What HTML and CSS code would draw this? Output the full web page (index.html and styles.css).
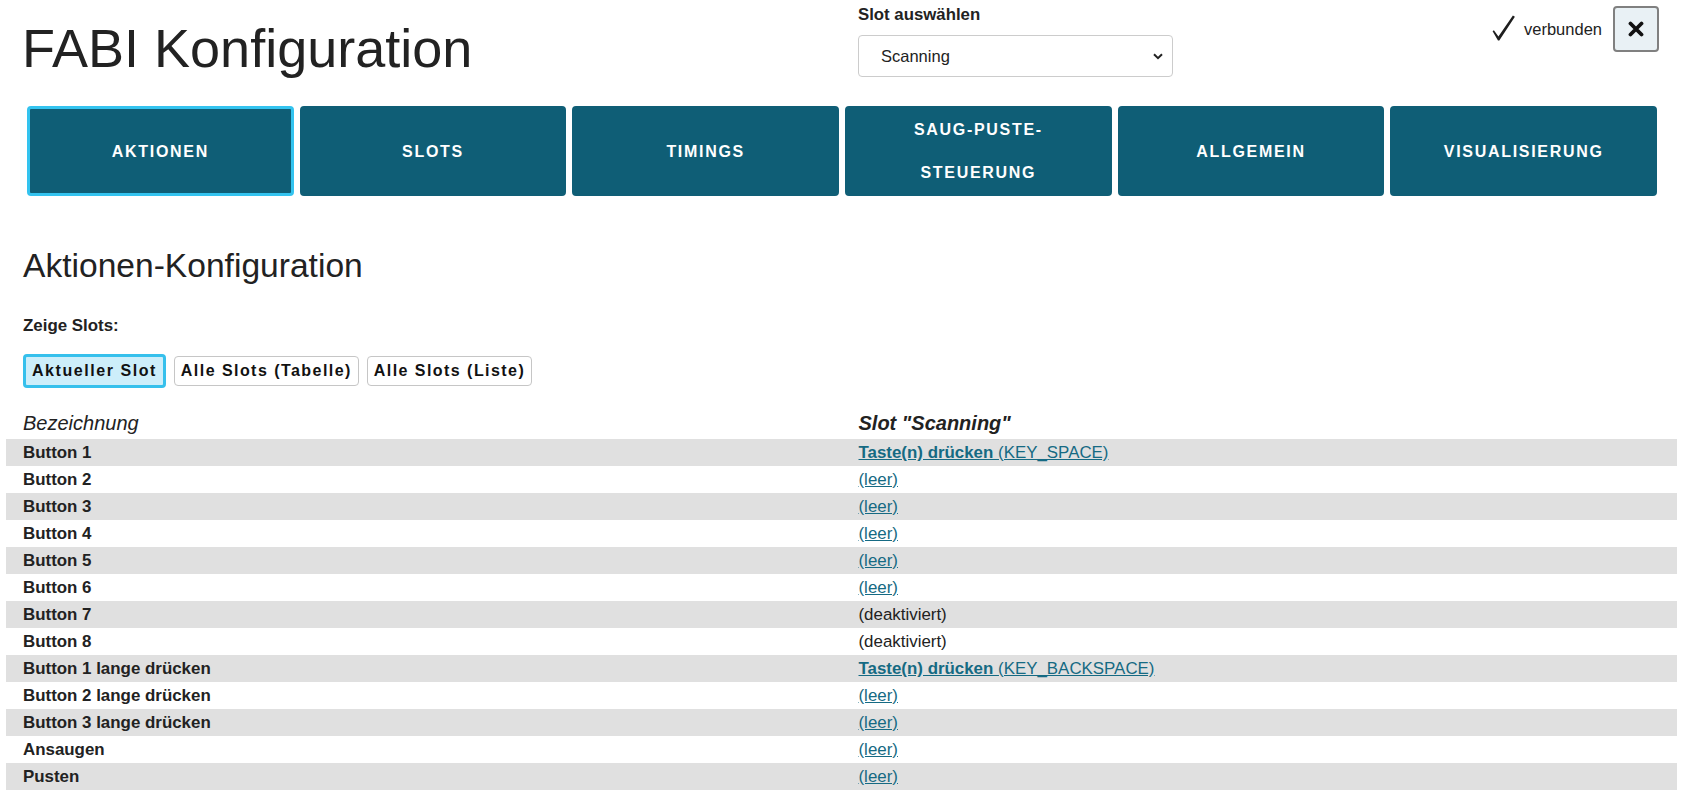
FILE: index.html
```html
<!DOCTYPE html>
<html lang="de">
<head>
<meta charset="utf-8">
<title>FABI Konfiguration</title>
<link rel="stylesheet" href="styles.css">
</head>
<body>
<header class="top">
  <h1 class="app-title">FABI Konfiguration</h1>
  <div class="slot-select">
    <label class="slot-label" for="slot">Slot auswählen</label>
    <div class="select-wrap">
      <select id="slot" class="select">
        <option>Scanning</option>
      </select>
      <svg class="chevron" width="10" height="7" viewBox="0 0 10 7"><path d="M1 1.2 L5 5.2 L9 1.2" fill="none" stroke="#222" stroke-width="2"/></svg>
    </div>
  </div>
  <div class="status">
    <svg class="check" width="24" height="26" viewBox="0 0 24 26"><path d="M0.6 16.2 L1.9 15.3 L6.4 21.6 L20.9 0.6 L22.9 1.7 L7.3 25.6 L6 25.6 Z" fill="#1e1e1e"/></svg>
    <span class="status-text">verbunden</span>
    <button class="close-btn" type="button" aria-label="Trennen"><svg width="16" height="16" viewBox="0 0 16 16"><path d="M2.5 2.5 L13.5 13.5 M13.5 2.5 L2.5 13.5" stroke="#111" stroke-width="3.8" stroke-linecap="round"/></svg></button>
  </div>
</header>

<nav class="tabs">
  <button class="tab active" type="button">Aktionen</button>
  <button class="tab" type="button">Slots</button>
  <button class="tab" type="button">Timings</button>
  <button class="tab" type="button">Saug-Puste-Steuerung</button>
  <button class="tab" type="button">Allgemein</button>
  <button class="tab" type="button">Visualisierung</button>
</nav>

<main class="content">
  <h2 class="section-title">Aktionen-Konfiguration</h2>
  <p class="show-label">Zeige Slots:</p>
  <div class="toggles">
    <button class="toggle active" type="button">Aktueller Slot</button>
    <button class="toggle" type="button">Alle Slots (Tabelle)</button>
    <button class="toggle" type="button">Alle Slots (Liste)</button>
  </div>
</main>

<table class="actions">
  <thead>
    <tr><th class="h-name">Bezeichnung</th><th class="h-slot">Slot "Scanning"</th></tr>
  </thead>
  <tbody>
    <tr><td class="name">Button 1</td><td><a href="#" class="act"><b>Taste(n) drücken </b>(KEY_SPACE)</a></td></tr>
    <tr><td class="name">Button 2</td><td><a href="#" class="act">(leer)</a></td></tr>
    <tr><td class="name">Button 3</td><td><a href="#" class="act">(leer)</a></td></tr>
    <tr><td class="name">Button 4</td><td><a href="#" class="act">(leer)</a></td></tr>
    <tr><td class="name">Button 5</td><td><a href="#" class="act">(leer)</a></td></tr>
    <tr><td class="name">Button 6</td><td><a href="#" class="act">(leer)</a></td></tr>
    <tr><td class="name">Button 7</td><td>(deaktiviert)</td></tr>
    <tr><td class="name">Button 8</td><td>(deaktiviert)</td></tr>
    <tr><td class="name">Button 1 lange drücken</td><td><a href="#" class="act"><b>Taste(n) drücken </b>(KEY_BACKSPACE)</a></td></tr>
    <tr><td class="name">Button 2 lange drücken</td><td><a href="#" class="act">(leer)</a></td></tr>
    <tr><td class="name">Button 3 lange drücken</td><td><a href="#" class="act">(leer)</a></td></tr>
    <tr><td class="name">Ansaugen</td><td><a href="#" class="act">(leer)</a></td></tr>
    <tr><td class="name">Pusten</td><td><a href="#" class="act">(leer)</a></td></tr>
  </tbody>
</table>
</body>
</html>
```

FILE: styles.css
```css
* { box-sizing: border-box; }

body {
  margin: 0;
  font-family: "Liberation Sans", Arial, sans-serif;
  font-size: 16px;
  color: #222;
  background: #fff;
}

.top {
  display: flex;
  align-items: flex-start;
  height: 80px;
  padding: 0 26px 0 22px;
}

.app-title {
  flex: 0 0 836px;
  margin: 17px 0 0;
  font-size: 54px;
  line-height: 62px;
  font-weight: normal;
  color: #222;
}

.slot-select {
  flex: 0 0 315px;
  padding-top: 6px;
}

.slot-label {
  display: block;
  font-weight: bold;
  font-size: 16.8px;
  line-height: 18px;
  color: #222;
}

.select-wrap {
  position: relative;
  margin-top: 11px;
}

.select {
  appearance: none;
  -webkit-appearance: none;
  display: block;
  width: 315px;
  height: 42px;
  padding: 0 30px 0 22px;
  border: 1px solid #ccc;
  border-radius: 4px;
  background: #fff;
  font-family: inherit;
  font-size: 16.5px;
  color: #222;
}

.chevron {
  position: absolute;
  right: 10px;
  top: 18px;
}

.status {
  margin-left: auto;
  margin-top: 6px;
  display: flex;
  align-items: center;
}

.check { margin-right: 8px; margin-top: -2px; }

.status-text {
  font-size: 16.5px;
  color: #222;
  margin-right: 11px;
}

.close-btn {
  width: 46px;
  height: 46px;
  padding: 0;
  border: 2px solid #808080;
  border-radius: 4px;
  background: #e9f1f5;
  display: flex;
  align-items: center;
  justify-content: center;
}

.tabs {
  display: flex;
  gap: 6px;
  height: 90px;
  margin: 26px 28px 0 27px;
}

.tab {
  flex: 1 1 0;
  min-width: 0;
  display: flex;
  align-items: center;
  justify-content: center;
  padding: 0 14px;
  border: 3px solid #0f5e76;
  border-radius: 4px;
  background: #0f5e76;
  color: #fff;
  font-family: inherit;
  font-size: 16px;
  font-weight: bold;
  letter-spacing: 1.7px;
  line-height: 43px;
  text-transform: uppercase;
  text-align: center;
}

.tab.active { border-color: #33c3ef; }

.content {
  padding: 0 22px 0 23px;
}

.section-title {
  margin: 50px 0 0;
  font-size: 33.6px;
  line-height: 40px;
  font-weight: normal;
  color: #222;
}

.show-label {
  margin: 30px 0 0;
  font-weight: bold;
  font-size: 16.9px;
  line-height: 20px;
}

.toggles {
  display: flex;
  align-items: center;
  gap: 8px;
  margin-top: 18px;
}

.toggle {
  padding: 5px 6px;
  border: 1px solid #c6c6c6;
  border-radius: 4px;
  background: #fff;
  color: #111;
  font-family: inherit;
  font-size: 16px;
  font-weight: bold;
  line-height: 18px;
  letter-spacing: 1.45px;
}

.toggle.active {
  border: 3px solid #36c0ec;
  background: #cdeefa;
  letter-spacing: 1.55px;
}

.actions {
  width: calc(100% - 14px);
  margin: 19px 8px 0 6px;
  border-collapse: collapse;
  table-layout: fixed;
}

.actions th {
  height: 32px;
  padding: 0 17px;
  text-align: left;
  font-size: 20px;
  line-height: 23px;
  font-style: italic;
  vertical-align: middle;
  color: #222;
}

.actions .h-name { font-weight: normal; }
.actions .h-slot { font-weight: bold; }

.actions td {
  padding: 4px 17px;
  font-size: 16.9px;
  line-height: 19px;
  color: #222;
}

.actions td.name { font-weight: bold; }

.actions tbody tr:nth-child(odd) { background: #e0e0e0; }

.act {
  color: #156a83;
  text-decoration: underline;
}
```
